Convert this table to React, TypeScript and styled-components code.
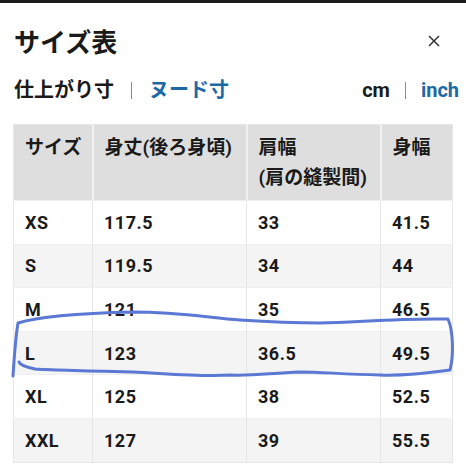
import React from "react";
import styled, { createGlobalStyle } from "styled-components";

const Global = createGlobalStyle`
  html, body { margin: 0; padding: 0; background: #ffffff; }
  body { font-family: Roboto, "Noto Sans CJK JP", sans-serif; color: #1a1a1a; }
`;

const Page = styled.div`
  position: relative;
  width: 466px;
  height: 466px;
  overflow: hidden;
  background: #ffffff;
  display: flex;
  flex-direction: column;
`;

const TopBar = styled.div`
  height: 3px;
  background: #1c1c1c;
`;

const TitleRow = styled.div`
  display: flex;
  align-items: center;
  justify-content: space-between;
  padding: 0 26px 0 14px;
  margin-top: 20px;
  height: 36px;
`;

const Title = styled.h1`
  margin: 0;
  font-family: "Noto Sans CJK JP", sans-serif;
  font-size: 26px;
  line-height: 36px;
  font-weight: 700;
  color: #1a1a1a;
`;

const CloseButton = styled.button`
  border: none;
  background: none;
  padding: 0;
  width: 12px;
  height: 12px;
  display: flex;
  color: #333;
`;

const TabsRow = styled.div`
  display: flex;
  align-items: center;
  justify-content: space-between;
  padding: 0 7px 0 14px;
  margin-top: 17px;
  height: 28px;
`;

const Group = styled.div`
  display: flex;
  align-items: center;
`;

const Tab = styled.span<{ $active?: boolean }>`
  font-family: Roboto, "Noto Sans CJK JP", sans-serif;
  font-size: 20px;
  line-height: 28px;
  font-weight: 700;
  color: ${(p) => (p.$active ? "#1b6aa5" : "#1a1a1a")};
`;

const Sep = styled.span<{ $gap: number }>`
  display: inline-block;
  width: 0;
  height: 17px;
  border-left: 1.5px solid #8a8a8a;
  margin: 0 ${(p) => p.$gap}px;
`;

const Table = styled.table`
  margin: 20px 0 0 13px;
  width: 439px;
  border-collapse: collapse;
  table-layout: fixed;
  border: 1px solid #e6e6e6;
`;

const Th = styled.th<{ $w: number }>`
  width: ${(p) => p.$w}px;
  height: 76px;
  box-sizing: border-box;
  background: #dedede;
  border-left: 2px solid #f0f0f0;
  vertical-align: top;
  text-align: left;
  padding: 8px 8px 0 11px;
  font-family: Roboto, "Noto Sans CJK JP", sans-serif;
  font-size: 19px;
  line-height: 30px;
  font-weight: 700;
  color: #1a1a1a;
  &:first-child { border-left: none; }
`;

const Tr = styled.tr<{ $alt: boolean }>`
  background: ${(p) => (p.$alt ? "#f4f4f4" : "#ffffff")};
`;

const Td = styled.td`
  height: 43.6px;
  box-sizing: border-box;
  padding: 0 0 0 11px;
  border-left: 1px solid #e6e6e6;
  border-top: 1px solid #efefef;
  font-family: Roboto, "Noto Sans CJK JP", sans-serif;
  font-size: 18px;
  font-weight: 700;
  letter-spacing: 0.5px;
  color: #1a1a1a;
  vertical-align: middle;
  &:first-child { border-left: none; }
`;

const Scribble = styled.svg`
  position: absolute;
  left: 0;
  top: 0;
  pointer-events: none;
`;

const rows = [
  ["XS", "117.5", "33", "41.5"],
  ["S", "119.5", "34", "44"],
  ["M", "121", "35", "46.5"],
  ["L", "123", "36.5", "49.5"],
  ["XL", "125", "38", "52.5"],
  ["XXL", "127", "39", "55.5"],
];

export default function App() {
  return (
    <>
      <Global />
      <Page>
        <TopBar />
        <TitleRow>
          <Title>サイズ表</Title>
          <CloseButton aria-label="close">
            <svg width="12" height="12" viewBox="0 0 12 12">
              <path d="M1 1 L11 11 M11 1 L1 11" stroke="#333" strokeWidth="1.5" />
            </svg>
          </CloseButton>
        </TitleRow>
        <TabsRow>
          <Group>
            <Tab>仕上がり寸</Tab>
            <Sep $gap={17} />
            <Tab $active>ヌード寸</Tab>
          </Group>
          <Group>
            <Tab>cm</Tab>
            <Sep $gap={15} />
            <Tab $active>inch</Tab>
          </Group>
        </TabsRow>
        <Table>
          <thead>
            <tr>
              <Th $w={79}>サイズ</Th>
              <Th $w={154}>身丈(後ろ身頃)</Th>
              <Th $w={134}>
                肩幅
                <br />
                (肩の縫製間)
              </Th>
              <Th $w={72}>身幅</Th>
            </tr>
          </thead>
          <tbody>
            {rows.map((r, i) => (
              <Tr key={r[0]} $alt={i % 2 === 1}>
                {r.map((c, j) => (
                  <Td key={j}>{c}</Td>
                ))}
              </Tr>
            ))}
          </tbody>
        </Table>
        <Scribble width="466" height="466" viewBox="0 0 466 466">
          <path
            d="M13,376 C14,360 16,335 18,323 C40,316 90,313 133,312 C180,312 210,318 240,320 C270,322 290,323 320,323 C360,322 400,318 448,319 C453,330 454,355 450,370 C420,374 400,376 380,375 C340,374 320,372 300,372 C270,373 255,376 230,375 C200,377 160,373 133,372 C90,371 50,370 35,369 C25,367 20,365 19,362"
            fill="none"
            stroke="#5a78d4"
            strokeWidth="3"
            strokeLinecap="round"
            strokeLinejoin="round"
          />
        </Scribble>
      </Page>
    </>
  );
}
